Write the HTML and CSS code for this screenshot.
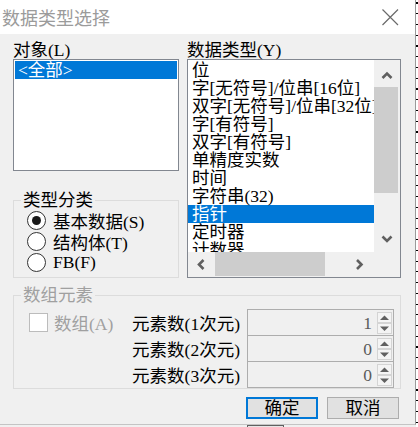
FILE: index.html
```html
<!DOCTYPE html>
<html lang="zh-CN">
<head>
<meta charset="utf-8">
<title>数据类型选择</title>
<link rel="stylesheet" href="styles.css">
</head>
<body>
<div class="screen">
  <div class="window-col">
    <div class="dialog">
      <div class="titlebar">
        <span class="title">数据类型选择</span>
        <svg class="close" width="17" height="17" viewBox="0 0 17 17"><path d="M0.5 0.5 L16 16 M16 0.5 L0.5 16" stroke="#6a6a6a" stroke-width="1.2" fill="none"/></svg>
      </div>
      <div class="content">
        <div class="top">
          <div class="col-left">
            <div class="label">对象(L)</div>
            <div class="list list-objects">
              <div class="item selected">&lt;全部&gt;</div>
            </div>
            <fieldset class="group group-kind">
              <legend>类型分类</legend>
              <div class="radio-row"><span class="radio checked"></span><span>基本数据(S)</span></div>
              <div class="radio-row"><span class="radio"></span><span>结构体(T)</span></div>
              <div class="radio-row"><span class="radio"></span><span>FB(F)</span></div>
            </fieldset>
          </div>
          <div class="col-right">
            <div class="label">数据类型(Y)</div>
            <div class="list list-types">
              <div class="list-items">
                <div class="item">位</div>
                <div class="item">字[无符号]/位串[16位]</div>
                <div class="item">双字[无符号]/位串[32位]</div>
                <div class="item">字[有符号]</div>
                <div class="item">双字[有符号]</div>
                <div class="item">单精度实数</div>
                <div class="item">时间</div>
                <div class="item">字符串(32)</div>
                <div class="item selected">指针</div>
                <div class="item">定时器</div>
                <div class="item">计数器</div>
              </div>
              <div class="vscroll">
                <div class="sb-btn vbtn"><svg width="26" height="26" viewBox="0 0 26 26"><polyline points="8.5,18 13,13.5 17.5,18" fill="none" stroke="#606060" stroke-width="2.6"/></svg></div>
                <div class="vthumb"></div>
                <div class="sb-fill"></div>
                <div class="sb-btn vbtn"><svg width="26" height="26" viewBox="0 0 26 26"><polyline points="8.5,10.5 13,15 17.5,10.5" fill="none" stroke="#606060" stroke-width="2.6"/></svg></div>
              </div>
              <div class="hscroll">
                <div class="sb-btn hbtn-l"><svg width="27" height="25" viewBox="0 0 27 25"><polyline points="15.5,8 11,12.5 15.5,17" fill="none" stroke="#606060" stroke-width="2.6"/></svg></div>
                <div class="hthumb"></div>
                <div class="sb-fill"></div>
                <div class="sb-btn hbtn-r"><svg width="26" height="25" viewBox="0 0 26 25"><polyline points="9,8 13.5,12.5 9,17" fill="none" stroke="#606060" stroke-width="2.6"/></svg></div>
              </div>
              <div class="corner"></div>
            </div>
          </div>
        </div>

        <fieldset class="group group-array">
          <legend class="disabled">数组元素</legend>
          <div class="array-grid">
            <div class="check-cell">
              <span class="checkbox"></span><span class="disabled">数组(A)</span>
            </div>
            <div class="dim-label r1">元素数(1次元)</div>
            <div class="spin r1">
              <span class="spin-value">1</span>
              <span class="spin-btns">
                <span class="spin-btn"><svg width="13" height="9" viewBox="0 0 13 9"><polygon points="2,7 6.5,2.5 11,7" fill="#606060"/></svg></span>
                <span class="spin-btn"><svg width="13" height="9" viewBox="0 0 13 9"><polygon points="2,2.5 6.5,7 11,2.5" fill="#606060"/></svg></span>
              </span>
            </div>
            <div class="dim-label r2">元素数(2次元)</div>
            <div class="spin r2">
              <span class="spin-value">0</span>
              <span class="spin-btns">
                <span class="spin-btn"><svg width="13" height="9" viewBox="0 0 13 9"><polygon points="2,7 6.5,2.5 11,7" fill="#606060"/></svg></span>
                <span class="spin-btn"><svg width="13" height="9" viewBox="0 0 13 9"><polygon points="2,2.5 6.5,7 11,2.5" fill="#606060"/></svg></span>
              </span>
            </div>
            <div class="dim-label r3">元素数(3次元)</div>
            <div class="spin r3 last">
              <span class="spin-value">0</span>
              <span class="spin-btns">
                <span class="spin-btn"><svg width="13" height="9" viewBox="0 0 13 9"><polygon points="2,7 6.5,2.5 11,7" fill="#606060"/></svg></span>
                <span class="spin-btn"><svg width="13" height="9" viewBox="0 0 13 9"><polygon points="2,2.5 6.5,7 11,2.5" fill="#606060"/></svg></span>
              </span>
            </div>
          </div>
        </fieldset>

        <div class="buttons">
          <button class="btn default">确定</button>
          <button class="btn">取消</button>
        </div>
      </div>
    </div>
    <div class="below"><span class="behind-box"></span></div>
  </div>
  <div class="ruler"></div>
</div>
</body>
</html>
```

FILE: styles.css
```css
* { box-sizing: border-box; }
html, body { margin: 0; padding: 0; }
body {
  width: 418px;
  height: 427px;
  overflow: hidden;
  background: #f0f0f0;
  font-family: "Liberation Serif", "Noto Sans CJK SC", serif;
  font-size: 17.5px;
  color: #000;
}
.screen { display: flex; width: 418px; height: 427px; }
.window-col { width: 416px; display: flex; flex-direction: column; }
.ruler {
  width: 2px;
  height: 427px;
  background: repeating-linear-gradient(to bottom, #fff 0, #fff 2.5px, #000 2.5px, #000 3.6px, #fff 3.6px, #fff 10.75px);
}
.dialog {
  width: 416px;
  height: 425px;
  background: #f0f0f0;
  border-right: 1px solid #9a9a9a;
  border-bottom: 1px solid #c4c4c4;
}
.below { flex: 1; background: #f0f0f0; }
.behind-box {
  display: block;
  margin-left: 247px;
  width: 37px;
  height: 2px;
  border: 1px solid #606060;
  border-bottom: none;
  background: #e6e6e6;
}

/* title bar */
.titlebar {
  height: 34px;
  background: #fff;
  display: flex;
  align-items: center;
  justify-content: space-between;
  padding: 0 16px 0 2px;
}
.title {
  font-family: "Noto Sans CJK SC", sans-serif;
  font-size: 18px;
  line-height: 34px;
  color: #9b9b9b;
  letter-spacing: 0;
}
.close { margin-top: 0; }

/* content */
.content { padding: 8px 0 0 13px; }
.top { display: flex; gap: 8px; }
.col-left { width: 166px; }
.col-right { width: 214px; }
.label { line-height: 17px; height: 17px; white-space: nowrap; }

.list {
  background: #fff;
  border: 1px solid #828790;
  overflow: hidden;
}
.list-objects { height: 112px; padding: 1px; }
.item {
  height: 18px;
  line-height: 18px;
  padding-left: 3px;
  white-space: nowrap;
}
.item.selected { background: #0078d7; color: #fff; }

.list-types {
  height: 219px;
  display: grid;
  grid-template-columns: 186px 26px;
  grid-template-rows: 192px 25px;
}
.list-items { overflow: hidden; padding-top: 1px; }
.list-types .item { padding-left: 4px; }

.vscroll, .hscroll, .corner { background: #f0f0f0; }
.vscroll { display: flex; flex-direction: column; }
.vbtn { height: 26px; }
.vthumb { height: 106px; width: 24px; margin-top: 1px; background: #cdcdcd; }
.sb-fill { flex: 1; }
.hscroll { display: flex; }
.hbtn-l { width: 27px; }
.hbtn-r { width: 26px; }
.hthumb { width: 110px; height: 24px; background: #cdcdcd; }
.sb-btn svg { display: block; }

/* group boxes */
.group {
  margin: 0;
  padding: 0;
  border: 1px solid #dcdcdc;
  min-width: 0;
}
.group legend {
  margin-left: 7px;
  padding: 0 2px;
  line-height: 20px;
  height: 20px;
}
.group-kind { margin-top: 19px; width: 166px; padding-bottom: 4px; }
.radio-row { height: 21px; display: flex; align-items: center; white-space: nowrap; }
.radio {
  width: 19px;
  height: 19px;
  margin: 0 7px 0 13px;
  border-radius: 50%;
  border: 1px solid #333;
  background: #fff;
  display: flex;
  align-items: center;
  justify-content: center;
  flex: none;
}
.radio.checked::after {
  content: "";
  width: 9px;
  height: 9px;
  border-radius: 50%;
  background: #1a1a1a;
}

.disabled { color: #a0a0a0; }
.group-array { margin-top: 7px; width: 388px; }
.array-grid {
  padding-top: 4px;
  display: grid;
  grid-template-columns: 111px 115px 147px;
  grid-template-rows: 26px 26px 27px;
  column-gap: 0;
}
.array-grid .spin { margin-left: 7px; width: 147px; }
.array-grid { grid-template-columns: 111px 115px 154px; }
.check-cell { grid-column: 1; grid-row: 1; display: flex; align-items: center; }
.checkbox {
  width: 19px;
  height: 19px;
  margin: 0 6px 0 15px;
  border: 1px solid #bcbcbc;
  background: #fff;
  flex: none;
}
.dim-label {
  grid-column: 2;
  text-align: right;
  display: flex;
  align-items: center;
  justify-content: flex-end;
  white-space: nowrap;
}
.r1 { grid-row: 1; }
.r2 { grid-row: 2; }
.r3 { grid-row: 3; }
.spin {
  grid-column: 3;
  border: 1px solid #adadad;
  border-bottom: none;
  display: flex;
  align-items: center;
}
.spin.last { border-bottom: 1px solid #adadad; }
.spin-value {
  flex: 1;
  text-align: right;
  padding-right: 5px;
  color: #5a5a5a;
  line-height: 20px;
}
.spin-btns {
  width: 15px;
  height: 22px;
  margin-right: 1px;
  display: flex;
  flex-direction: column;
}
.spin-btn {
  height: 11px;
  border: 1px solid #d4d4d4;
  background: #f4f4f4;
  display: flex;
  align-items: center;
  justify-content: center;
}
.spin-btn svg { display: block; }

/* buttons */
.buttons {
  margin-top: 8px;
  padding-right: 2px;
  display: flex;
  justify-content: flex-end;
  gap: 9px;
  width: 388px;
}
.btn {
  width: 72px;
  height: 22px;
  padding: 0;
  background: #e1e1e1;
  border: 1px solid #adadad;
  font-family: "Liberation Serif", "Noto Sans CJK SC", serif;
  font-size: 17.5px;
  line-height: 18px;
  color: #000;
}
.btn.default { border: 2px solid #0078d7; }
```
